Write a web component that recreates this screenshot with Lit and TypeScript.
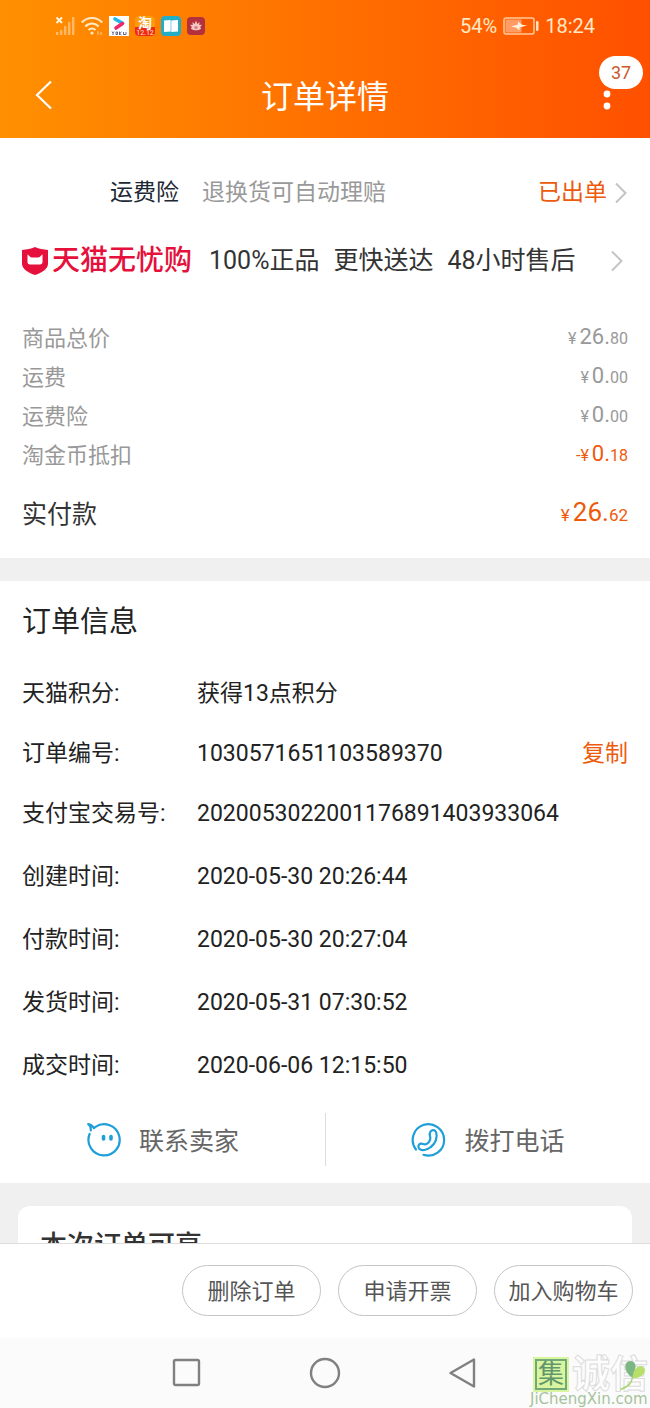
import { LitElement, html, css } from "lit";
import { customElement, property } from "lit/decorators.js";

interface Price {
  label: string;
  sign: string;
  whole: string;
  cents: string;
  tone?: string;
}

const PRICES: Price[] = [
  { label: "商品总价", sign: "¥", whole: "26.", cents: "80" },
  { label: "运费", sign: "¥", whole: "0.", cents: "00" },
  { label: "运费险", sign: "¥", whole: "0.", cents: "00" },
  { label: "淘金币抵扣", sign: "-¥", whole: "0.", cents: "18", tone: "accent" },
];

const INFO = [
  { label: "天猫积分:", value: "获得13点积分" },
  { label: "订单编号:", value: "1030571651103589370", copy: true },
  { label: "支付宝交易号:", value: "2020053022001176891403933064" },
];

const TIMES = [
  { label: "创建时间:", value: "2020-05-30 20:26:44" },
  { label: "付款时间:", value: "2020-05-30 20:27:04" },
  { label: "发货时间:", value: "2020-05-31 07:30:52" },
  { label: "成交时间:", value: "2020-06-06 12:15:50" },
];

const base = css`
  * {
    box-sizing: border-box;
    margin: 0;
    padding: 0;
  }
  button {
    font: inherit;
    color: inherit;
    background: none;
    border: 0;
    cursor: pointer;
  }
  a {
    color: inherit;
    text-decoration: none;
  }
  svg {
    display: block;
    flex: none;
  }
`;

const chevron = html`<svg class="chevron" width="14" height="22" viewBox="0 0 14 22" fill="none" stroke="#c4c4c4" stroke-width="2">
  <path d="M2 1.5 11.5 11 2 20.5" />
</svg>`;

@customElement("status-bar")
class StatusBar extends LitElement {
  static styles = [
    base,
    css`
      :host {
        display: block;
      }
      .bar {
        display: flex;
        justify-content: space-between;
        align-items: center;
        height: 52px;
        padding: 0 55px;
        color: #ffe9c4;
        font-size: 20px;
        line-height: 24px;
      }
      .group {
        display: flex;
        align-items: center;
        gap: 6px;
      }
    `,
  ];
  render() {
    return html`
      <div class="bar">
        <div class="group">
          <svg width="20" height="20" viewBox="0 0 20 20">
            <path d="M1.5 1.5 7 7M7 1.5 1.5 7" stroke="#fff4dc" stroke-width="2" />
            <g fill="#ffb866">
              <rect x="1" y="16" width="2.4" height="3" />
              <rect x="5" y="14" width="2.4" height="5" />
              <rect x="9" y="10" width="2.4" height="9" />
              <rect x="13" y="6" width="2.4" height="13" />
              <rect x="17" y="1" width="2.4" height="18" />
            </g>
          </svg>
          <svg width="22" height="20" viewBox="0 0 22 20" fill="none" stroke="#ffe9c4" stroke-width="2.2">
            <path d="M.8 6.5C6.5.5 15.5.5 21.2 6.5M4.300 10.500c4-4 9.400-4 13.400 0M7.500 14c2-2 5-2 7 0" />
            <circle cx="11" cy="17" r="1.600" fill="#ffe9c4" stroke="none" />
            <path d="M17 15v4M20 16v3" stroke="#ffb866" stroke-width="1.500" />
          </svg>
          <svg width="20" height="20" viewBox="0 0 20 20">
            <rect width="20" height="20" fill="#fff" />
            <path d="M6 3 13.500 7.200" stroke="#22b8e6" stroke-width="3.600" stroke-linecap="round" />
            <path d="M13.500 7.600 7 12" stroke="#ee2a6b" stroke-width="3.600" stroke-linecap="round" />
            <path d="M3 15.500 4 17l1-1.500M4 17v2M7 16h1.500v2.500H7ZM10.500 15.500V19M10.500 17.500l2-1.500M10.500 17.500l2 1.500M14.500 16v2.500H17V16" fill="none" stroke="#56577c" stroke-width=".9" />
          </svg>
          <svg width="20" height="20" viewBox="0 0 20 20">
            <rect width="20" height="20" rx="4" fill="#fb9a0c" />
            <path d="M0 11h20v5a4 4 0 0 1-4 4H4a4 4 0 0 1-4-4Z" fill="#f02a12" />
            <text x="10" y="12" text-anchor="middle" font-size="14" font-weight="700" fill="#fff">淘</text>
            <text x="10" y="19" text-anchor="middle" font-size="7" fill="#ffe8d0">12.12</text>
          </svg>
          <svg width="20" height="20" viewBox="0 0 20 20">
            <rect width="20" height="20" rx="4" fill="#22aec6" />
            <path d="M3 4.500 9.700 4v11.500L3 16ZM10.300 4.600 17 4v11.500l-6.700.5Z" fill="#fff" />
          </svg>
          <svg width="18" height="18" viewBox="0 0 18 18">
            <rect width="18" height="18" rx="4" fill="#b3303c" />
            <path d="M9 3.500 10.300 7l2.200-2-.3 3 2.800-.3-2 2.500 1.200 1c-1.400 2.800-8.900 2.800-10.400 0l1.200-1-2-2.500 2.800.3-.3-3 2.200 2Z" fill="#f3c8c4" />
            <circle cx="9" cy="10.500" r="1.700" fill="#d98088" />
          </svg>
        </div>
        <div class="group">
          <span>54%</span>
          <svg width="36" height="18" viewBox="0 0 36 18">
            <rect x="1" y="1" width="30" height="16" rx="2" fill="none" stroke="#ffc99a" stroke-width="1.500" />
            <rect x="2.500" y="2.500" width="16" height="13" fill="#ff9c66" />
            <path d="M8 9.500 15 7.500V4.500l4 3.200 5 .8-7.500 2v3l-3.500-3Z" fill="#fff2dd" />
            <rect x="33" y="4" width="2.500" height="10" rx="1" fill="#ffe0bc" />
          </svg>
          <span>18:24</span>
        </div>
      </div>
    `;
  }
}

@customElement("title-bar")
class TitleBar extends LitElement {
  static styles = [
    base,
    css`
      :host {
        display: grid;
        grid-template-columns: 88px 1fr 88px;
        align-items: center;
        height: 86px;
        color: #fff;
      }
      .back {
        padding-left: 34px;
      }
      h1 {
        padding-top: 4px;
        text-align: center;
        font-size: 32px;
        line-height: 44px;
        font-weight: 400;
      }
      .more {
        position: relative;
        height: 86px;
        padding-left: 40px;
      }
      .badge {
        position: absolute;
        top: 4px;
        right: 7px;
        width: 44px;
        border-radius: 17px;
        background: #fff;
        color: #c9582c;
        font-size: 18px;
        line-height: 33px;
        text-align: center;
      }
    `,
  ];
  render() {
    return html`
      <button class="back" aria-label="返回">
        <svg width="20" height="30" viewBox="0 0 20 30" fill="none" stroke="#fff" stroke-width="2.200">
          <path d="M17 1.500 3 15 17 28.500" />
        </svg>
      </button>
      <h1>订单详情</h1>
      <button class="more" aria-label="更多">
        <svg width="10" height="34" viewBox="0 0 10 34" fill="#fff">
          <circle cx="5" cy="4" r="3.400" />
          <circle cx="5" cy="16" r="3.400" />
          <circle cx="5" cy="28" r="3.400" />
        </svg>
        <span class="badge">37</span>
      </button>
    `;
  }
}

@customElement("price-row")
class PriceRow extends LitElement {
  @property({ attribute: false }) price!: Price;
  @property({ type: Boolean, reflect: true }) total = false;
  static styles = [
    base,
    css`
      :host {
        display: flex;
        justify-content: space-between;
        align-items: center;
        height: 32px;
        color: #999;
        font-size: 22px;
        line-height: 32px;
      }
      :host([total]) {
        color: #333;
        font-size: 25px;
      }
      .small {
        font-size: 16px;
      }
      .sign {
        margin-right: 3px;
      }
      .amount {
        line-height: 28px;
        padding-bottom: 2px;
      }
      .accent {
        color: #ed5a0c;
      }
      :host([total]) .amount {
        font-size: 26px;
        padding-bottom: 4px;
      }
      :host([total]) .small {
        font-size: 17px;
      }
    `,
  ];
  render() {
    const p = this.price;
    return html`
      <span>${p.label}</span>
      <span class="amount ${p.tone ?? ""}"
        ><span class="small sign">${p.sign}</span>${p.whole}<span class="small">${p.cents}</span></span
      >
    `;
  }
}

@customElement("site-mark")
class SiteMark extends LitElement {
  static styles = [
    base,
    css`
      :host {
        display: block;
        width: 120px;
      }
      .top {
        display: flex;
        gap: 5px;
        align-items: center;
      }
      .seal {
        margin-left: 5px;
        width: 32px;
        border: 2px solid #73a878;
        outline: 2px solid #d9f5a0;
        background: #d9f5a0;
        color: #62966c;
        font-size: 26px;
        line-height: 27px;
        text-align: center;
      }
      .name {
        position: relative;
        font-size: 38px;
        line-height: 31px;
        font-weight: 700;
        color: #fdfdfd;
        white-space: nowrap;
        -webkit-text-stroke: 1px #dcdcdc;
      }
      .leaf {
        position: absolute;
        right: 0;
        top: 0;
      }
      .site {
        font: 15px/18px "DejaVu Sans", sans-serif;
        color: #a6c39d;
        white-space: nowrap;
      }
    `,
  ];
  render() {
    return html`
      <div class="top">
        <span class="seal">集</span>
        <span class="name"
          >诚信<svg class="leaf" width="30" height="34" viewBox="0 0 30 34">
            <path d="M15 19C7 15 5 5 10 2.500c5-2 8 1.500 7.500 6Z" fill="#7cb783" />
            <path d="M14.500 19c0-6 4-13 9.500-11.500 7 3 1 12.500-9.500 11.500Z" fill="#b8df6b" />
            <path d="M14.500 18.500c-1 6-4 9-12 12" fill="none" stroke="#a9d36d" stroke-width="1.500" />
          </svg></span
        >
      </div>
      <div class="site">JiChengXin.com</div>
    `;
  }
}

@customElement("app-root")
class AppRoot extends LitElement {
  static styles = [
    base,
    css`
      :host {
        position: relative;
        display: flex;
        flex-direction: column;
        height: 100vh;
        overflow: hidden;
        background: #fff;
        color: #222;
        font-family: Roboto, "Noto Sans CJK SC", sans-serif;
        font-size: 23px;
        line-height: 36px;
      }
      header {
        flex: none;
        background: linear-gradient(90deg, #ff9000, #ff5000);
      }
      main {
        flex: 1;
        min-height: 0;
        overflow: hidden;
        background: #f0f0f0;
      }
      section {
        background: #fff;
      }
      .charges {
        padding: 37px 22px 27px;
        margin-bottom: 23px;
      }
      .insurance {
        display: flex;
        align-items: center;
        padding-left: 88px;
        color: #1c2833;
      }
      .insurance .note {
        margin-left: 23px;
        color: #999;
      }
      .insurance .state {
        margin-left: auto;
        margin-right: 7px;
        color: #ed5a0c;
      }
      .service {
        display: flex;
        align-items: center;
        gap: 14px;
        margin-top: 32px;
        font-size: 25px;
        color: #333;
      }
      .service > .chevron {
        margin-left: auto;
        margin-right: 4px;
      }
      .brand {
        display: flex;
        align-items: center;
        gap: 4px;
        margin-right: 3px;
        font-size: 28px;
        font-weight: 500;
        color: #e6103c;
      }
      .prices {
        display: grid;
        gap: 7px;
        margin-top: 44px;
      }
      .total {
        margin-top: 27px;
      }
      .info {
        padding: 20px 22px 17px;
      }
      h2 {
        font-size: 29px;
        line-height: 42px;
        font-weight: 400;
      }
      .list {
        display: grid;
        gap: 24px;
        margin-top: 33px;
      }
      .times {
        gap: 27px;
        margin-top: 27px;
      }
      .line {
        display: grid;
        grid-template-columns: 175px 1fr auto;
      }
      .copy {
        color: #ed5a0c;
      }
      .contact {
        display: grid;
        grid-template-columns: 1fr 1fr;
        margin: 29px -22px 0;
        font-size: 25px;
        color: #666;
      }
      .contact button {
        display: flex;
        align-items: center;
        justify-content: center;
        gap: 17px;
        height: 53px;
      }
      .contact span {
        padding-top: 4px;
      }
      .contact button + button {
        border-left: 1px solid #ddd;
      }
      .perks {
        margin: 23px 18px 0;
        padding: 20px 22px;
        border-radius: 12px;
      }
      .perks h2 {
        font-size: 27px;
        line-height: 40px;
        font-weight: 500;
        color: #333;
      }
      footer {
        flex: none;
        display: flex;
        justify-content: flex-end;
        gap: 17px;
        padding: 21px 17px 22px;
        border-top: 1px solid #ddd;
        font-size: 22px;
        color: #555;
      }
      footer button {
        width: 139px;
        height: 51px;
        padding-top: 2px;
        border: 1px solid #c4c4c4;
        border-radius: 26px;
        white-space: nowrap;
      }
      nav {
        flex: none;
        display: flex;
        justify-content: center;
        align-items: center;
        gap: 107px;
        height: 70px;
        background: #fbfbfb;
      }
      site-mark {
        position: absolute;
        right: 0;
        bottom: 0;
      }
    `,
  ];

  row(r: { label: string; value: string; copy?: boolean }) {
    return html`<div class="line">
      <dt>${r.label}</dt>
      <dd>${r.value}</dd>
      ${r.copy ? html`<dd><button class="copy">复制</button></dd>` : ""}
    </div>`;
  }

  render() {
    return html`
      <header>
        <status-bar></status-bar>
        <title-bar></title-bar>
      </header>
      <main>
        <section class="charges">
          <a class="insurance" href="#insurance">
            <span>运费险</span>
            <span class="note">退换货可自动理赔</span>
            <span class="state">已出单</span>
            ${chevron}
          </a>
          <a class="service" href="#service">
            <span class="brand">
              <svg width="26" height="28" viewBox="0 0 26 28">
                <path d="M13 0c4 2 8 2.500 13 3v14c0 5-7 9-13 11C7 26 0 22 0 17V3c5-.5 9-1 13-3Z" fill="#e6103c" />
                <path d="M5.500 7.500C7 8 8 10.500 9.500 10.500h7c1.500 0 2.500-2.500 4-3v7.500c0 1.500-1 2.500-2.500 2.500H8c-1.500 0-2.500-1-2.500-2.500Z" fill="#fff" />
              </svg>
              天猫无忧购
            </span>
            <span>100%正品</span>
            <span>更快送达</span>
            <span>48小时售后</span>
            ${chevron}
          </a>
          <div class="prices">${PRICES.map((p) => html`<price-row .price=${p}></price-row>`)}</div>
          <price-row
            class="total"
            total
            .price=${{ label: "实付款", sign: "¥", whole: "26.", cents: "62", tone: "accent" }}
          ></price-row>
        </section>
        <section class="info">
          <h2>订单信息</h2>
          <dl class="list">${INFO.map((r) => this.row(r))}</dl>
          <dl class="list times">${TIMES.map((r) => this.row(r))}</dl>
          <div class="contact">
            <button>
              <svg width="36" height="36" viewBox="0 0 36 36" fill="none" stroke="#1f9fd8" stroke-width="2.200" stroke-linecap="round" stroke-linejoin="round">
                <path d="M3.600 12A15.600 15.600 0 1 0 9.500 4.800L8 6.200C6.500 4 5 2.500 2.200 2.200 4.200 3.500 5 6 4.800 8.500" />
                <path d="M17.500 14.500v2.500M25 14.500v2.500" stroke-width="3.600" />
              </svg>
              <span>联系卖家</span>
            </button>
            <button>
              <svg width="36" height="36" viewBox="0 0 36 36" fill="none" stroke="#1f9fd8" stroke-width="2.200" stroke-linecap="round" stroke-linejoin="round">
                <path d="M5 27.500A15.700 15.700 0 1 1 12.500 32.800" />
                <path d="M19.500 9.500c2-2.300 4.800-1.600 5.700 1 1.600 5-.8 11-5.400 14.500-4 3.200-9.300 4.300-11.600 1.800-1.700-2-.7-4.600 1.500-5.200 1.800-.4 3 1.200 5 .6 2.800-.9 5-4 4.600-6.800-.3-2-1.500-3.400.2-5.900Z" />
              </svg>
              <span>拨打电话</span>
            </button>
          </div>
        </section>
        <section class="perks"><h2>本次订单可享</h2></section>
      </main>
      <footer>
        <button>删除订单</button>
        <button>申请开票</button>
        <button>加入购物车</button>
      </footer>
      <nav>
        <button aria-label="最近任务">
          <svg width="30" height="32" viewBox="0 0 30 32" fill="none" stroke="#808080" stroke-width="2.400">
            <rect x="2" y="3" width="25" height="25" rx="1.500" />
          </svg>
        </button>
        <button aria-label="主屏幕">
          <svg width="32" height="32" viewBox="0 0 32 32" fill="none" stroke="#808080" stroke-width="2.400">
            <circle cx="16" cy="16" r="14" />
          </svg>
        </button>
        <button aria-label="返回上一页">
          <svg width="30" height="32" viewBox="0 0 30 32" fill="none" stroke="#808080" stroke-width="2.400" stroke-linejoin="round">
            <path d="M2.500 16 26 2.500v27Z" />
          </svg>
        </button>
      </nav>
      <site-mark></site-mark>
    `;
  }
}
